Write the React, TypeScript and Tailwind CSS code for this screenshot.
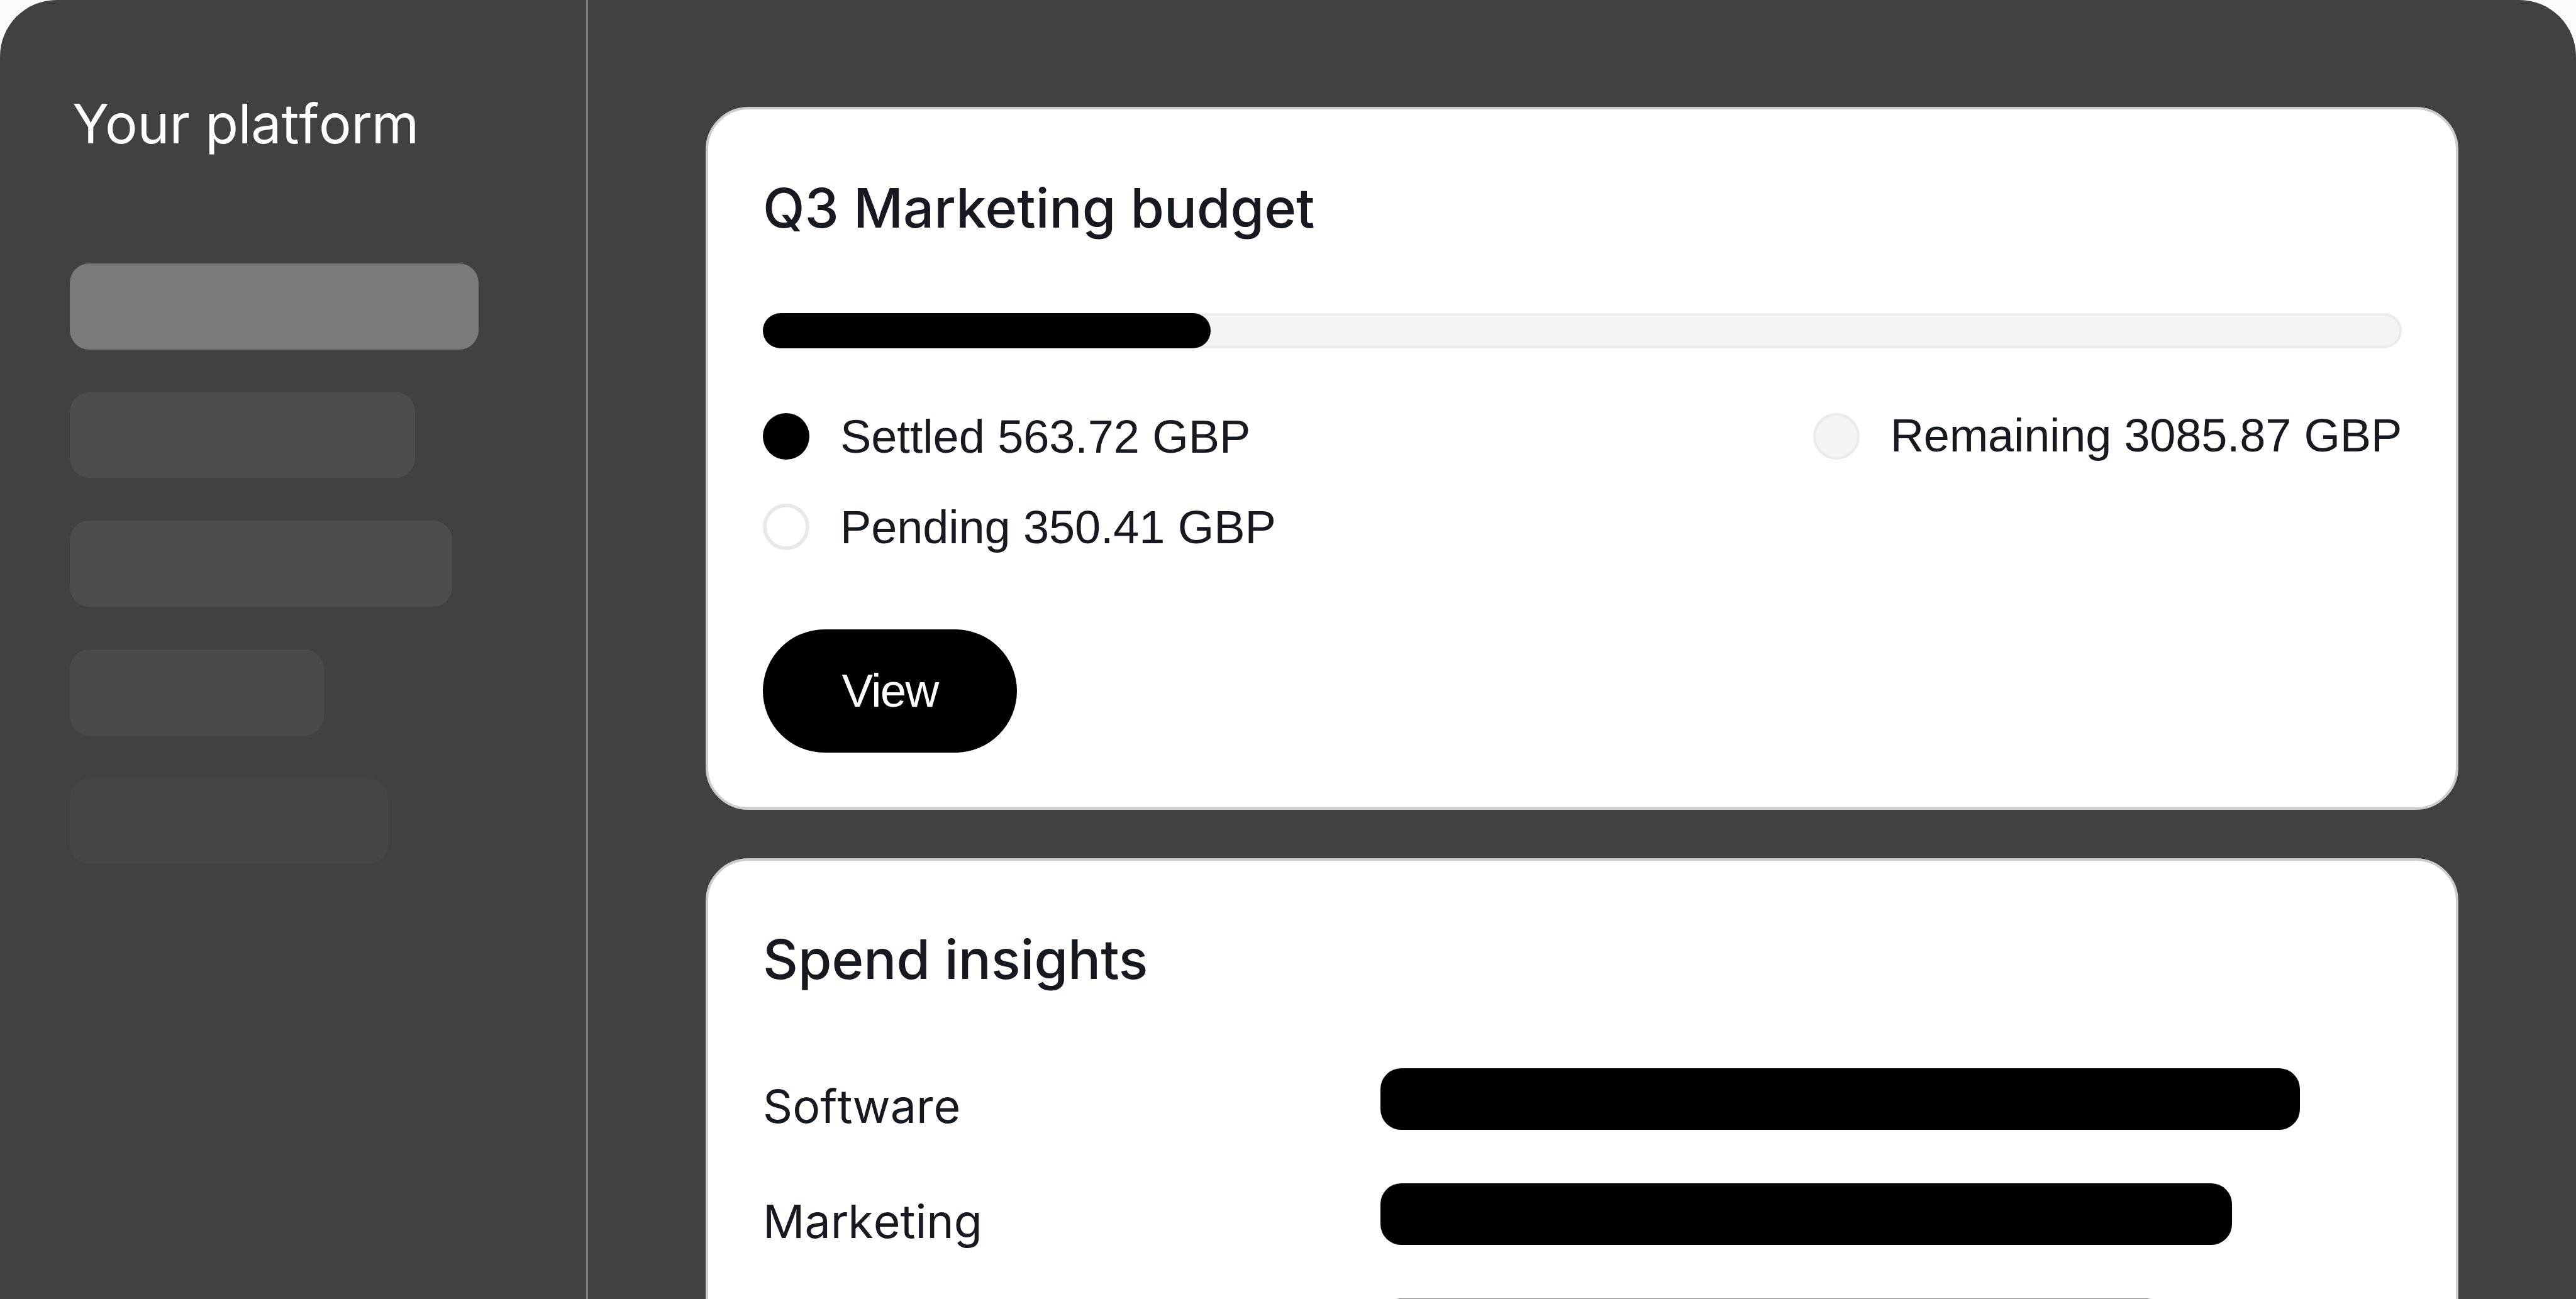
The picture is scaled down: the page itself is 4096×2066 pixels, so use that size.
import type { ReactNode } from "react";

const navItems = [
  "w-[650px] bg-[#7b7b7b]",
  "w-[549px] bg-[#4d4d4d]",
  "w-[608px] bg-[#4d4d4d]",
  "w-[404px] bg-[#4a4a4a]",
  "w-[506px] bg-[#454545]",
];

const insights = [
  { label: "Software", bar: "w-[1462px] bg-black" },
  { label: "Marketing", bar: "w-[1354px] bg-black" },
  { label: "", bar: "w-[1250px] bg-[#7f7f7f]" },
];

function Sidebar() {
  return (
    <aside className="flex w-[935px] shrink-0 flex-col border-r-3 border-[#7b7b7b] pt-[141px] pl-[111px]">
      <h1 className="pl-[4px] text-[86.2px] leading-[112px] whitespace-nowrap text-white">
        Your <span className="tracking-[-0.25px] [font-kerning:none]">platform</span>
      </h1>
      <nav className="mt-[166px] flex flex-col gap-[68px]">
        {navItems.map((item) => (
          <div key={item} className={`h-[136.7px] rounded-[31px] ${item}`} />
        ))}
      </nav>
    </aside>
  );
}

function Card({ title, children, className }: { title: string; children: ReactNode; className: string }) {
  return (
    <section
      className={`w-[2787px] shrink-0 rounded-[68px] border-4 border-[#cccccc] bg-white px-[87px] pt-[101px] ${className}`}
    >
      <h2 className="text-[86.6px] leading-[112px] font-medium whitespace-nowrap">{title}</h2>
      {children}
    </section>
  );
}

function Legend({ dot, text, className }: { dot: string; text: string; className: string }) {
  return (
    <div className="flex h-[74px] items-start gap-[49px]">
      <span className={`size-[74px] shrink-0 rounded-full ${dot}`} />
      <span className={`font-['Liberation_Sans',sans-serif] text-[74px] whitespace-nowrap ${className}`}>{text}</span>
    </div>
  );
}

export default function App() {
  return (
    <div className="h-[2066px] w-[4096px] overflow-hidden bg-[#fafafa] font-['Inter',sans-serif] text-[#171920]">
      <div className="flex h-full rounded-t-[90px] bg-[#414141]">
        <Sidebar />
        <main className="flex flex-col gap-[77px] pt-[170px] pl-[187px]">
          <Card title="Q3 Marketing budget" className="h-[1118px]">
            <div className="mt-[111px] h-[56px] w-[2606px] rounded-full bg-[#f4f4f4] inset-ring-4 inset-ring-[#ebebeb]">
              <div className="h-full w-[712px] rounded-full bg-black" />
            </div>
            <div className="mt-[103px] flex w-[2606px] items-start justify-between">
              <div className="flex flex-col gap-[70px]">
                <Legend dot="bg-black" text="Settled 563.72 GBP" className="leading-[76px] tracking-[-0.1px]" />
                <Legend
                  dot="border-6 border-[#e9e9e9] bg-white"
                  text="Pending 350.41 GBP"
                  className="leading-[76px] tracking-[-0.15px]"
                />
              </div>
              <Legend
                dot="border-4 border-[#ebebeb] bg-[#f4f4f4]"
                text="Remaining 3085.87 GBP"
                className="leading-[71px] tracking-[-0.25px]"
              />
            </div>
            <button className="mt-[126px] flex h-[196px] w-[404px] items-center justify-center rounded-full bg-black font-['Liberation_Sans',sans-serif] text-[74.5px] leading-[74px] tracking-[-1.8px] text-white">
              View
            </button>
          </Card>
          <Card title="Spend insights" className="h-[1118px]">
            <div className="mt-[117px] flex flex-col gap-[85px]">
              {insights.map(({ label, bar }) => (
                <div key={bar} className="flex h-[98px]">
                  <span className="w-[982px] shrink-0 pt-[12px] text-[73.5px] leading-[98px] [font-kerning:none]">
                    {label}
                  </span>
                  <div className={`h-[98px] rounded-[33px] ${bar}`} />
                </div>
              ))}
            </div>
          </Card>
        </main>
      </div>
    </div>
  );
}
